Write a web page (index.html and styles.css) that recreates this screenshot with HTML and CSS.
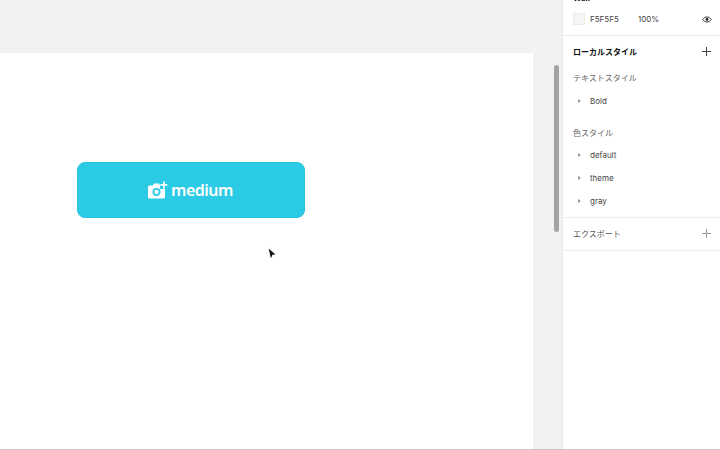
FILE: index.html
```html
<!DOCTYPE html>
<html lang="ja">
<head>
  <meta charset="UTF-8">
  <title>Styles panel</title>
  <link rel="stylesheet" href="styles.css">
</head>
<body>
  <div class="app">
    <!-- Canvas -->
    <main class="canvas">
      <div class="canvas-top"></div>
      <div class="frame">
        <button class="btn-medium">
          <svg class="btn-icon" width="20" height="18" viewBox="0 0 20 18">
            <path fill="#fff" d="M1.500 4.500h3.300L6 2.500h5l1.200 2h3.300a1.500 1.500 0 0 1 1.500 1.500v10a1.500 1.500 0 0 1-1.500 1.500h-14A1.500 1.500 0 0 1 0 16V6a1.500 1.500 0 0 1 1.500-1.500z"/>
            <circle cx="8.500" cy="11" r="4" fill="#2bcbe6"/>
            <circle cx="8.500" cy="11" r="2.200" fill="#fff"/>
            <path fill="#2bcbe6" d="M12 0h8v8h-8z"/>
            <path fill="#fff" d="M15 .5h1.700v2.600h2.600v1.700h-2.600v2.600H15V4.800h-2.600V3.100H15z"/>
          </svg>
          <span>medium</span>
        </button>
        <svg class="cursor" width="13" height="16" viewBox="0 0 12 15">
          <path fill="#111" stroke="#fff" stroke-width="1" d="M1.500 1l8.500 7.300-3.700.3-1.900 4.600z"/>
        </svg>
      </div>
    </main>

    <!-- Scrollbar gutter -->
    <div class="gutter"><div class="thumb"></div></div>

    <!-- Right panel -->
    <aside class="panel">
      <section class="fill-section">
        <div class="fill-title">Wall</div>
        <div class="fill-row">
          <span class="swatch"></span>
          <span class="fill-hex">F5F5F5</span>
          <span class="fill-pct">100%</span>
          <svg class="eye" width="10" height="7" viewBox="0 0 12 8">
            <path fill="none" stroke="#222" stroke-width="1.100" d="M.8 4C2.200 2 4 1 6 1s3.800 1 5.200 3C9.800 6 8 7 6 7S2.200 6 .8 4z"/>
            <circle cx="6" cy="4" r="1.700" fill="#222"/>
          </svg>
        </div>
      </section>

      <section class="styles-section">
        <div class="section-head">
          <h3>ローカルスタイル</h3>
          <svg class="plus" width="9" height="9" viewBox="0 0 9 9"><path stroke="#444" d="M4.500 0v9M0 4.500h9"/></svg>
        </div>
        <div class="group-label">テキストスタイル</div>
        <div class="style-item"><span class="caret"></span>Bold</div>
        <div class="group-label color-label">色スタイル</div>
        <div class="style-item"><span class="caret"></span>default</div>
        <div class="style-item"><span class="caret"></span>theme</div>
        <div class="style-item"><span class="caret"></span>gray</div>
      </section>

      <section class="export-section">
        <span>エクスポート</span>
        <svg class="plus" width="9" height="9" viewBox="0 0 9 9"><path stroke="#999" d="M4.500 0v9M0 4.500h9"/></svg>
      </section>
    </aside>
  </div>
  <div class="bottom-line"></div>
</body>
</html>
```

FILE: styles.css
```css
html, body {
  margin: 0;
  height: 100%;
  overflow: hidden;
}

body {
  background-color: #fff;
  color: #444;
  font-family: "Inter", "Noto Sans CJK JP", sans-serif;
  display: flex;
  flex-direction: column;
}

.app {
  display: flex;
  height: 449px;
}

.bottom-line {
  height: 1px;
  background-color: #c8c8c8;
}

/* canvas */
.canvas {
  width: 533px;
  display: flex;
  flex-direction: column;
}

.canvas-top {
  height: 53px;
  background-color: #f2f2f2;
}

.frame {
  flex: 1;
  position: relative;
  background-color: #fff;
  padding: 109px 0 0 77px;
}

.btn-medium {
  width: 228px;
  height: 56px;
  box-sizing: border-box;
  display: flex;
  align-items: center;
  justify-content: center;
  gap: 3px;
  padding: 0 1px 0 0;
  background-color: #2bcbe6;
  border: 1px solid #25c3de;
  border-radius: 8px;
  color: #fff;
  font-family: "Noto Sans", sans-serif;
  font-size: 16px;
  font-weight: 600;
  letter-spacing: -0.5px;
}

.btn-icon {
  display: block;
  margin-bottom: 1px;
}

.cursor {
  position: absolute;
  left: 266px;
  top: 193px;
}

/* scrollbar */
.gutter {
  width: 30px;
  box-sizing: border-box;
  background-color: #f2f2f2;
  border-right: 1px solid #e8e8e8;
  padding: 65px 0 0 21px;
}

.thumb {
  width: 5px;
  height: 167px;
  border-radius: 3px;
  background-color: #a3a3a3;
}

/* right panel */
.panel {
  flex: 1;
  font-size: 8px;
}

.fill-section {
  height: 35px;
  border-bottom: 1px solid #ededed;
  position: relative;
}

.fill-title {
  position: absolute;
  top: -7px;
  left: 10px;
  font-weight: 700;
  color: #111;
  font-size: 8px;
  line-height: 10px;
}

.fill-row {
  display: flex;
  align-items: center;
  padding: 13px 0 0 10px;
  height: 12px;
}

.swatch {
  width: 10px;
  height: 10px;
  background-color: #f5f5f5;
  border: 1px solid #ececec;
}

.fill-hex {
  margin-left: 5px;
  width: 48px;
}

.fill-pct {
  width: 64px;
}

.styles-section {
  height: 182px;
  border-bottom: 1px solid #ededed;
  box-sizing: border-box;
  padding-top: 10px;
}

.section-head {
  display: flex;
  justify-content: space-between;
  align-items: center;
  padding: 0 9px 0 10px;
  height: 11px;
}

.section-head h3 {
  margin: 0;
  font-size: 8px;
  font-weight: 700;
  color: #111;
}

.group-label {
  margin: 16px 0 0 10px;
  line-height: 11px;
  color: #666;
}

.color-label {
  margin-top: 22px;
}

.style-item {
  display: flex;
  align-items: center;
  height: 11px;
  margin-top: 12px;
  padding-left: 15px;
}

.group-label + .style-item {
  margin-top: 11px;
}

.color-label + .style-item {
  margin-top: 10px;
}

.caret {
  width: 0;
  height: 0;
  margin-right: 9px;
  border-left: 3px solid #999;
  border-top: 2px solid transparent;
  border-bottom: 2px solid transparent;
}

.export-section {
  height: 33px;
  box-sizing: border-box;
  border-bottom: 1px solid #ededed;
  display: flex;
  justify-content: space-between;
  align-items: center;
  padding: 0 9px 2px 10px;
  color: #555;
}
```
